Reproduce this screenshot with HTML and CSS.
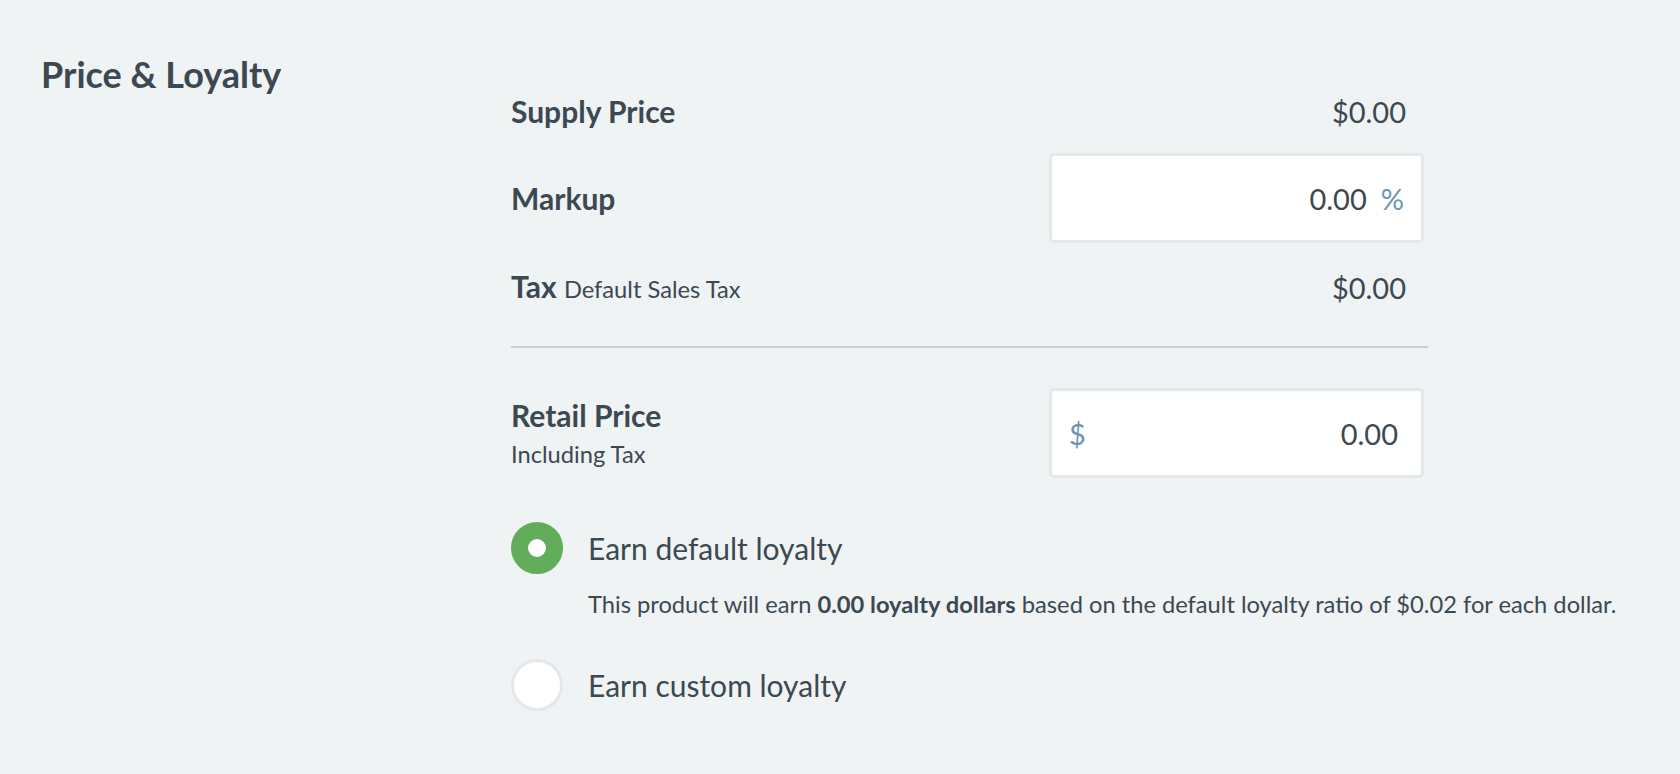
FILE: index.html
```html
<!DOCTYPE html>
<html lang="en">
<head>
<meta charset="utf-8">
<title>Price &amp; Loyalty</title>
<link rel="stylesheet" href="styles.css">
</head>
<body>
<div class="page">
  <section class="section">
    <h2 class="section-title">Price &amp; Loyalty</h2>
    <div class="section-body">
      <div class="price-table">
        <div class="row row-plain">
          <div class="label">Supply Price</div>
          <div class="value">$0.00</div>
        </div>
        <div class="row row-input">
          <div class="label">Markup</div>
          <div class="input">
            <span class="input-value">0.00</span>
            <span class="addon addon-suffix">%</span>
          </div>
        </div>
        <div class="row row-plain">
          <div class="label">Tax <span class="label-sub">Default Sales Tax</span></div>
          <div class="value">$0.00</div>
        </div>
        <hr class="divider">
        <div class="row row-input">
          <div class="label-stack">
            <div class="label">Retail Price</div>
            <div class="hint">Including Tax</div>
          </div>
          <div class="input input-prefixed">
            <span class="addon addon-prefix">$</span>
            <span class="input-value">0.00</span>
          </div>
        </div>
      </div>
      <div class="loyalty">
        <label class="radio-row">
          <span class="radio radio-checked"></span>
          <span class="radio-label">Earn default loyalty</span>
        </label>
        <p class="loyalty-desc">This product will earn <strong>0.00 loyalty dollars</strong> based on the default loyalty ratio of $0.02 for each dollar.</p>
        <label class="radio-row">
          <span class="radio"></span>
          <span class="radio-label">Earn custom loyalty</span>
        </label>
      </div>
    </div>
  </section>
</div>
</body>
</html>
```

FILE: styles.css
```css
* { box-sizing: border-box; }
html, body {
  margin: 0;
  padding: 0;
  background: #eff3f4;
}
body {
  font-family: Lato, "Open Sans", "Liberation Sans", sans-serif;
  color: #3c4852;
  height: 774px;
  overflow: hidden;
}
.page {
  padding: 52px 0 0 41px;
}
.section {
  display: flex;
  align-items: flex-start;
}
.section-title {
  width: 470px;
  flex: none;
  margin: 0;
  font-size: 36px;
  line-height: 44px;
  font-weight: 700;
}
.section-body {
  display: flex;
  flex-direction: column;
  padding-top: 34px;
}
.price-table {
  width: 917px;
  display: flex;
  flex-direction: column;
}
.row {
  display: flex;
  align-items: center;
  justify-content: space-between;
}
.row-plain {
  height: 50px;
  padding-right: 22px;
}
.row-input {
  height: 90px;
  padding-right: 4px;
}
.row-plain + .row-input { margin-top: 17px; }
.row-input + .row-plain { margin-top: 19px; }
.label {
  font-size: 30px;
  line-height: 36px;
  font-weight: 700;
}
.label-sub {
  font-size: 23.7px;
  font-weight: 400;
}
.label-stack {
  display: flex;
  flex-direction: column;
  gap: 7.6px;
}
.hint {
  font-size: 23.7px;
  line-height: 28.8px;
}
.value {
  font-size: 29px;
}
.input {
  width: 375px;
  height: 90px;
  background: #fff;
  border: 3px solid #e3e8eb;
  border-radius: 5px;
  display: flex;
  align-items: center;
  justify-content: flex-end;
  padding: 0 17px;
  font-size: 29px;
  gap: 14px;
}
.input-prefixed {
  padding-right: 23px;
}
.addon {
  color: #6e93b5;
}
.addon-prefix {
  margin-right: auto;
}
.divider {
  margin: 34px 0 40px;
  border: 0;
  height: 2px;
  background: #c6cfd2;
}
.loyalty {
  display: flex;
  flex-direction: column;
  margin-top: 44px;
}
.radio-row {
  display: flex;
  align-items: center;
  gap: 25px;
}
.radio {
  width: 52px;
  height: 52px;
  border-radius: 50%;
  background: #fff;
  border: 3px solid #e3e8eb;
  flex: none;
}
.radio-checked {
  background: #fff;
  border: 17px solid #61ad5a;
}
.radio-label {
  font-size: 30px;
}
.loyalty-desc {
  margin: 15.6px 0 40.6px 77px;
  font-size: 23.7px;
  line-height: 28.8px;
  white-space: nowrap;
}
.loyalty-desc strong { font-weight: 700; }
```
